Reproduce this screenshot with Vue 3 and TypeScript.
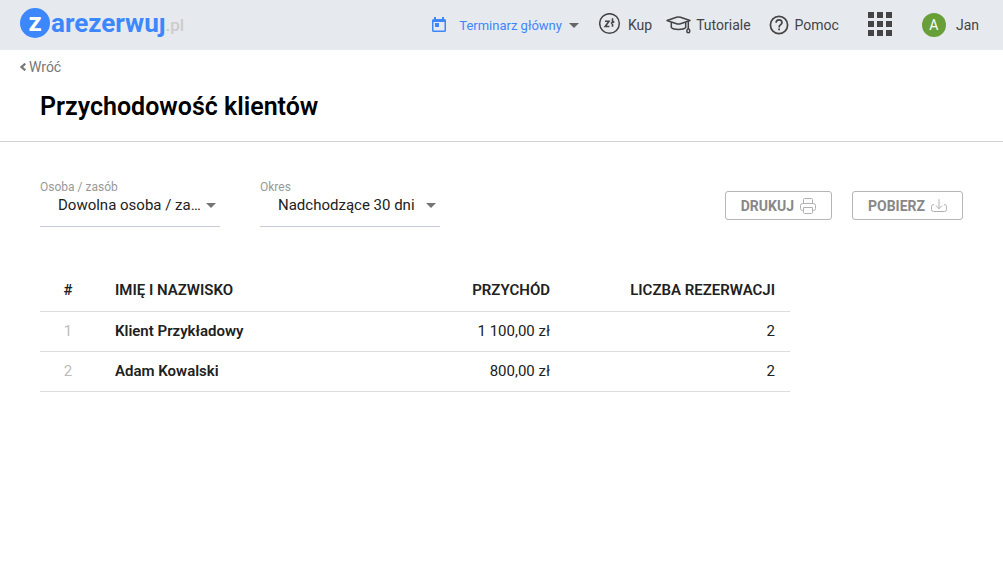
<script setup lang="ts">
import { ref } from 'vue'

interface ClientRow {
  name: string
  income: string
  bookings: number
}

const rows: ClientRow[] = [
  { name: 'Klient Przykładowy', income: '1 100,00 zł', bookings: 2 },
  { name: 'Adam Kowalski', income: '800,00 zł', bookings: 2 },
]

const resources: string[] = ['Dowolna osoba / zasób']
const periods: string[] = ['Nadchodzące 30 dni']
const resource = ref<string>(resources[0])
const period = ref<string>(periods[0])
const dots: number[] = [0, 9, 18]
</script>

<template>
  <div class="page">
    <header class="topbar">
      <a class="logo" href="#" aria-label="zarezerwuj.pl">
        <span class="logo-badge">z</span>
        <span class="logo-name">arezerwuj</span>
        <span class="logo-tld">.pl</span>
      </a>
      <nav class="nav">
        <button type="button" class="calendar">
          <svg width="14" height="16" viewBox="0 0 14 16" aria-hidden="true">
            <path fill="#3d87fd" fill-rule="evenodd" d="M2 0h2v2h6V0h2v2h.5A1.5 1.5 0 0 1 14 3.500v10A1.500 1.500 0 0 1 12.500 15h-11A1.500 1.500 0 0 1 0 13.500v-10A1.500 1.500 0 0 1 1.500 2H2zM1.500 5v8.500h11V5z" />
            <path fill="#3d87fd" d="M3 6h4v4H3z" />
          </svg>
          <span>Terminarz główny</span>
          <svg width="10" height="5" viewBox="0 0 10 5" aria-hidden="true"><path fill="#666" d="M0 0h10L5 5z" /></svg>
        </button>
        <a class="item buy" href="#">
          <svg width="22" height="24" viewBox="0 0 22 24" aria-hidden="true">
            <circle cx="10.500" cy="10.500" r="9.800" fill="none" stroke="#444" stroke-width="1.500" />
            <path d="M6 8.200h4L6.200 13.500h4.200M13.500 5.200v8.600M11.900 10.500l3.400-2" fill="none" stroke="#444" stroke-width="1.600" />
          </svg>
          <span>Kup</span>
        </a>
        <a class="item tutorials" href="#">
          <svg width="25" height="20" viewBox="0 0 25 20" fill="none" stroke="#444" stroke-width="1.500" stroke-linejoin="round" aria-hidden="true">
            <path d="M1 5.500 10.500 2.300Q12.500 1.600 14.500 2.300L24 5.500 14.500 8.700Q12.500 9.400 10.500 8.700z" />
            <path d="M5.300 7.200v5.300c2.500 2.600 11.900 2.600 14.400 0V7.200M22.300 5.700v7.500" />
            <path d="M22.300 13.300c-2 1.200-2 4.500 0 4.500s2-3.300 0-4.500z" />
          </svg>
          <span>Tutoriale</span>
        </a>
        <a class="item help" href="#">
          <svg width="20" height="20" viewBox="0 0 20 20" fill="none" stroke="#444" aria-hidden="true">
            <circle cx="10" cy="10" r="8.600" stroke-width="1.700" />
            <path d="M7.100 7.800c0-3.900 5.900-3.900 5.900-.3 0 2.200-2.900 2.300-2.900 4.900" stroke-width="1.700" />
            <path d="M9.200 14.400h1.800" stroke-width="1.800" />
          </svg>
          <span>Pomoc</span>
        </a>
        <button type="button" class="apps" aria-label="Aplikacje">
          <svg width="24" height="26" viewBox="0 0 24 26" fill="#444" aria-hidden="true">
            <template v-for="y in dots" :key="y">
              <rect v-for="x in dots" :key="x" :x="x" :y="y" width="6" height="6" />
            </template>
          </svg>
        </button>
        <button type="button" class="account">
          <span class="avatar">A</span>
          <span>Jan</span>
        </button>
      </nav>
    </header>

    <a class="back" href="#">
      <svg width="7" height="8" viewBox="0 0 7 8" aria-hidden="true"><path d="M5.300.700 1.500 4l3.800 3.300" fill="none" stroke="#777" stroke-width="2.200" /></svg>
      <span>Wróć</span>
    </a>
    <h1 class="title">Przychodowość klientów</h1>

    <main class="content">
      <div class="toolbar">
        <div class="field">
          <label for="resource">Osoba / zasób</label>
          <div class="control">
            <select id="resource" v-model="resource">
              <option v-for="r in resources" :key="r">{{ r }}</option>
            </select>
            <svg width="10" height="5" viewBox="0 0 10 5" aria-hidden="true"><path fill="#757575" d="M0 0h10L5 5z" /></svg>
          </div>
        </div>
        <div class="field">
          <label for="period">Okres</label>
          <div class="control">
            <select id="period" v-model="period">
              <option v-for="p in periods" :key="p">{{ p }}</option>
            </select>
            <svg width="10" height="5" viewBox="0 0 10 5" aria-hidden="true"><path fill="#757575" d="M0 0h10L5 5z" /></svg>
          </div>
        </div>
        <div class="actions">
          <button type="button" class="action">
            <span>DRUKUJ</span>
            <svg width="16" height="16" viewBox="0 0 16 16" fill="none" stroke="#b0b0b0" aria-hidden="true">
              <path d="M3.500 5.500v-4q0-1 1-1h7q1 0 1 1v4M3.500 12.500h-1q-2 0-2-2v-3q0-2 2-2h11q2 0 2 2v3q0 2-2 2h-1M3.500 9.500h9v5q0 1-1 1h-7q-1 0-1-1z" />
            </svg>
          </button>
          <button type="button" class="action">
            <span>POBIERZ</span>
            <svg width="16" height="16" viewBox="0 0 16 16" fill="none" stroke="#b0b0b0" stroke-linecap="round" aria-hidden="true">
              <path d="M2.500 6.500Q.500 6.500.500 8.500v3q0 2 2 2h11q2 0 2-2v-3q0-2-2-2M8 1.500v9M5 7.700l3 3 3-3" />
            </svg>
          </button>
        </div>
      </div>

      <table class="report">
        <thead>
          <tr>
            <th scope="col" class="index">#</th>
            <th scope="col" class="name">IMIĘ I NAZWISKO</th>
            <th scope="col" class="number">PRZYCHÓD</th>
            <th scope="col" class="number">LICZBA REZERWACJI</th>
          </tr>
        </thead>
        <tbody>
          <tr v-for="(row, i) in rows" :key="row.name">
            <td class="index">{{ i + 1 }}</td>
            <td class="name">{{ row.name }}</td>
            <td class="number">{{ row.income }}</td>
            <td class="number">{{ row.bookings }}</td>
          </tr>
        </tbody>
      </table>
    </main>
  </div>
</template>

<style>
body {
  margin: 0;
  background: #fff;
}
</style>

<style scoped>
.page {
  font-family: Roboto, "Liberation Sans", sans-serif;
  font-size: 15px;
  color: #212121;
}
button,
select {
  font: inherit;
  color: inherit;
  background: none;
  border: 0;
  padding: 0;
  margin: 0;
  cursor: pointer;
}
a {
  color: inherit;
  text-decoration: none;
}
svg {
  display: block;
  flex: none;
}
.topbar {
  display: flex;
  justify-content: space-between;
  height: 50px;
  padding: 0 24px 0 20px;
  box-sizing: border-box;
  background: #e6e9ee;
}
.logo {
  display: flex;
  align-items: center;
  height: 46px;
  font-weight: 700;
  color: #3d87fd;
}
.logo-badge {
  width: 30px;
  height: 30px;
  border-radius: 50%;
  background: #3d87fd;
  color: #fff;
  font-size: 26px;
  line-height: 28px;
  text-align: center;
}
.logo-name {
  margin-left: 1px;
  font-size: 26px;
  line-height: 28px;
  clip-path: inset(8px 0 0 0);
}
.logo-tld {
  font-size: 17px;
  line-height: 20px;
  padding-top: 3px;
  font-weight: 500;
  color: #ccc;
}
.nav {
  display: flex;
  align-items: center;
  font-size: 14px;
  color: #444;
}
.calendar {
  display: flex;
  align-items: center;
  font-size: 13px;
  color: #3d87fd;
}
.calendar span {
  margin: 0 7px 0 13px;
}
.item {
  display: flex;
  align-items: center;
  gap: 5px;
}
.buy {
  gap: 7px;
  margin-left: 20px;
}
.tutorials {
  margin-left: 14px;
}
.help {
  gap: 6px;
  margin-left: 18px;
}
.apps {
  margin-left: 29px;
}
.account {
  display: flex;
  align-items: center;
  gap: 10px;
  margin-left: 30px;
}
.avatar {
  width: 24px;
  height: 24px;
  border-radius: 50%;
  background: #689f38;
  color: #fff;
  line-height: 24px;
  text-align: center;
}
.back {
  display: flex;
  align-items: center;
  gap: 2px;
  width: max-content;
  margin-left: 20px;
  font-size: 14px;
  line-height: 34px;
  color: #777;
}
.title {
  margin: 0;
  padding: 2px 40px 14px;
  border-bottom: 1px solid #d2d2da;
  font-size: 25px;
  line-height: 41px;
  font-weight: 600;
  color: #000;
}
.content {
  padding: 38px 40px;
}
.toolbar {
  display: flex;
  align-items: flex-start;
  gap: 40px;
}
.field {
  width: 180px;
  height: 46px;
  border-bottom: 1px solid #c5ccd6;
}
.field label {
  display: block;
  font-size: 12px;
  line-height: 14px;
  color: #999;
}
.control {
  display: flex;
  align-items: center;
  gap: 4px;
  padding: 0 4px 0 18px;
  line-height: 22px;
}
.control select {
  flex: 1;
  min-width: 0;
  appearance: none;
  overflow: hidden;
  text-overflow: ellipsis;
  white-space: nowrap;
  line-height: 22px;
}
.actions {
  display: flex;
  gap: 20px;
  margin-left: auto;
  padding-top: 11px;
}
.action {
  display: flex;
  align-items: center;
  gap: 6px;
  height: 29px;
  padding: 0 15px;
  border: 1px solid #b5b5b5;
  border-radius: 3px;
  font-size: 14px;
  font-weight: 700;
  color: #888;
}
.report {
  width: 100%;
  max-width: 750px;
  margin-top: 44px;
  border-collapse: collapse;
  table-layout: fixed;
}
.report th,
.report td {
  height: 37px;
  padding: 0 0 2px;
  border-bottom: 1px solid #ddd;
  text-align: left;
  font-weight: 400;
}
.report th {
  height: 38px;
  font-weight: 600;
}
.report .index {
  width: 56px;
  padding-right: 19px;
  text-align: center;
}
.report td.index {
  color: #bbb;
}
.report .name {
  font-weight: 600;
}
.report .number {
  width: 210px;
  padding-right: 15px;
  text-align: right;
}
</style>
